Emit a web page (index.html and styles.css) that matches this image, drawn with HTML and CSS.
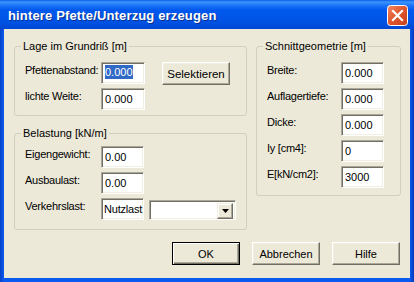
FILE: index.html
```html
<!DOCTYPE html>
<html lang="de">
<head>
    <meta charset="UTF-8">
    <title>hintere Pfette/Unterzug erzeugen</title>
    <link rel="stylesheet" href="styles.css">
</head>
<body>
    <div class="window">
        <div class="titlebar">
            <span class="title">hintere Pfette/Unterzug erzeugen</span>
            <span class="close">
                <svg width="21" height="21" viewBox="0 0 21 21">
                    <defs>
                        <linearGradient id="cg" x1="0" y1="0" x2="1" y2="1">
                            <stop offset="0" stop-color="#f08a64"/>
                            <stop offset="0.5" stop-color="#e0542b"/>
                            <stop offset="1" stop-color="#c4401e"/>
                        </linearGradient>
                    </defs>
                    <rect x="0.5" y="0.5" width="20" height="20" rx="3" fill="url(#cg)" stroke="#fff"/>
                    <path d="M6 6 L15 15 M15 6 L6 15" stroke="#fff" stroke-width="2.2" stroke-linecap="square"/>
                </svg>
            </span>
        </div>

        <div class="client">
            <div class="columns">
                <div class="left-col">
                    <!-- Lage -->
                    <fieldset class="group group-lage">
                        <legend>Lage im Grundriß [m]</legend>
                        <div class="rows">
                            <div class="row">
                                <span class="label">Pfettenabstand:</span>
                                <span class="edit"><span class="selected">0.000</span></span>
                                <span class="button btn-select">Selektieren</span>
                            </div>
                            <div class="row">
                                <span class="label">lichte Weite:</span>
                                <span class="edit">0.000</span>
                            </div>
                        </div>
                    </fieldset>

                    <!-- Belastung -->
                    <fieldset class="group group-last">
                        <legend>Belastung [kN/m]</legend>
                        <div class="rows">
                            <div class="row">
                                <span class="label">Eigengewicht:</span>
                                <span class="edit">0.00</span>
                            </div>
                            <div class="row">
                                <span class="label">Ausbaulast:</span>
                                <span class="edit">0.00</span>
                            </div>
                            <div class="row">
                                <span class="label">Verkehrslast:</span>
                                <span class="edit edit-static">Nutzlast</span>
                                <span class="combo">
                                    <span class="combo-btn">
                                        <svg width="7" height="4" viewBox="0 0 7 4"><polygon points="0,0 7,0 3.5,4" fill="#000"/></svg>
                                    </span>
                                </span>
                            </div>
                        </div>
                    </fieldset>
                </div>

                <div class="right-col">
                    <fieldset class="group group-schnitt">
                        <legend>Schnittgeometrie [m]</legend>
                        <div class="rows">
                            <div class="row">
                                <span class="label">Breite:</span>
                                <span class="edit">0.000</span>
                            </div>
                            <div class="row">
                                <span class="label">Auflagertiefe:</span>
                                <span class="edit">0.000</span>
                            </div>
                            <div class="row">
                                <span class="label">Dicke:</span>
                                <span class="edit">0.000</span>
                            </div>
                            <div class="row">
                                <span class="label">Iy [cm4]:</span>
                                <span class="edit">0</span>
                            </div>
                            <div class="row">
                                <span class="label">E[kN/cm2]:</span>
                                <span class="edit">3000</span>
                            </div>
                        </div>
                    </fieldset>
                </div>
            </div>

            <div class="buttons">
                <span class="button btn-default">OK</span>
                <span class="button">Abbrechen</span>
                <span class="button">Hilfe</span>
            </div>
        </div>
    </div>
</body>
</html>
```

FILE: styles.css
```css
body {
    margin: 0;
    font-family: "Liberation Sans", Arial, sans-serif;
    font-size: 11px;
    color: #000;
    background: #0054e3;
}

.window {
    width: 414px;
    height: 282px;
    display: flex;
    flex-direction: column;
    background: linear-gradient(to right, #0842c8 0, #0a5af0 4px, #0a5af0 410px, #0638b8 414px);
    overflow: hidden;
}

.titlebar {
    flex: none;
    height: 29px;
    display: flex;
    align-items: center;
    justify-content: space-between;
    padding: 0 6px 0 8px;
    background: linear-gradient(#0a5ee8 0, #3d95ff 2px, #1f77f7 5px, #0058ee 10px, #0055e8 18px, #0050e0 24px, #0046d2 29px);
}

.title {
    color: #fff;
    font-weight: bold;
    font-size: 13px;
    letter-spacing: 0.15px;
    text-shadow: 1px 1px #0a2f8e;
    padding-top: 1px;
}

.close {
    display: flex;
    margin-top: 2px;
}

.client {
    flex: 1;
    margin: 0 4px 4px;
    background: #ece9d8;
    padding: 11px 9px 0 10px;
}

.columns {
    display: flex;
    gap: 9px;
}

.left-col {
    width: 233px;
}

.right-col {
    width: 145px;
}

.group {
    margin: 0;
    padding: 0 10px 5px;
    border: 1px solid #d0d0bf;
    border-radius: 3px;
    min-width: 0;
}

.group legend {
    padding: 0 2px;
    margin-left: -4px;
    line-height: 13px;
}

.group-last {
    margin-top: 11px;
    padding-bottom: 9px;
}

.group-schnitt {
    padding-bottom: 7px;
}

.rows {
    display: flex;
    flex-direction: column;
    gap: 4px;
    margin-top: 9px;
}

.group-last .rows {
    margin-top: 6px;
}

.row {
    display: flex;
    align-items: flex-start;
    height: 22px;
}

.label {
    width: 76px;
    flex: none;
    line-height: 13px;
    padding-top: 2px;
    letter-spacing: -0.25px;
    white-space: nowrap;
}

.group-schnitt .label {
    width: 74px;
}

.edit {
    box-sizing: border-box;
    width: 44px;
    height: 22px;
    flex: none;
    background: #fff;
    border: 1px solid;
    border-color: #aca899 #fff #fff #aca899;
    box-shadow: inset 1px 1px #716f64, inset -1px -1px #f1efe2;
    padding: 0 0 0 3px;
    line-height: 20px;
    white-space: nowrap;
    overflow: hidden;
}

.group-last .edit,
.group-schnitt .edit {
    width: 43px;
}

.edit-static {
    padding-left: 2px;
    letter-spacing: -0.2px;
}

.selected {
    background: #316ac5;
    color: #fff;
    display: inline-block;
    line-height: 14px;
    vertical-align: 1px;
}

.combo {
    box-sizing: border-box;
    width: 94px;
    height: 20px;
    margin: 2px 0 0 5px;
    background: #fff;
    border: 1px solid;
    border-color: #aca899 #fff #fff #aca899;
    box-shadow: inset 1px 1px #716f64, inset -1px -1px #f1efe2;
    display: flex;
    justify-content: flex-end;
    padding: 2px;
}

.combo-btn {
    box-sizing: border-box;
    width: 16px;
    height: 16px;
    background: #ece9d8;
    border: 1px solid;
    border-color: #f1efe2 #716f64 #716f64 #f1efe2;
    box-shadow: inset -1px -1px #aca899, inset 1px 1px #fff;
    display: flex;
    align-items: center;
    justify-content: center;
}

.button {
    box-sizing: border-box;
    width: 68px;
    height: 23px;
    display: flex;
    align-items: center;
    justify-content: center;
    background: #ece9d8;
    border: 1px solid;
    border-color: #fff #716f64 #716f64 #fff;
    box-shadow: inset -1px -1px #aca899, inset 1px 1px #f1efe2;
}

.btn-select {
    margin-left: 17px;
    font-size: 11.5px;
}

.btn-default {
    border-color: #000;
    box-shadow: inset 1px 1px #fff, inset -1px -1px #716f64, inset -2px -2px #aca899;
}

.buttons {
    display: flex;
    justify-content: flex-end;
    gap: 12px;
    margin-top: 12px;
    padding-right: 1px;
}
```
